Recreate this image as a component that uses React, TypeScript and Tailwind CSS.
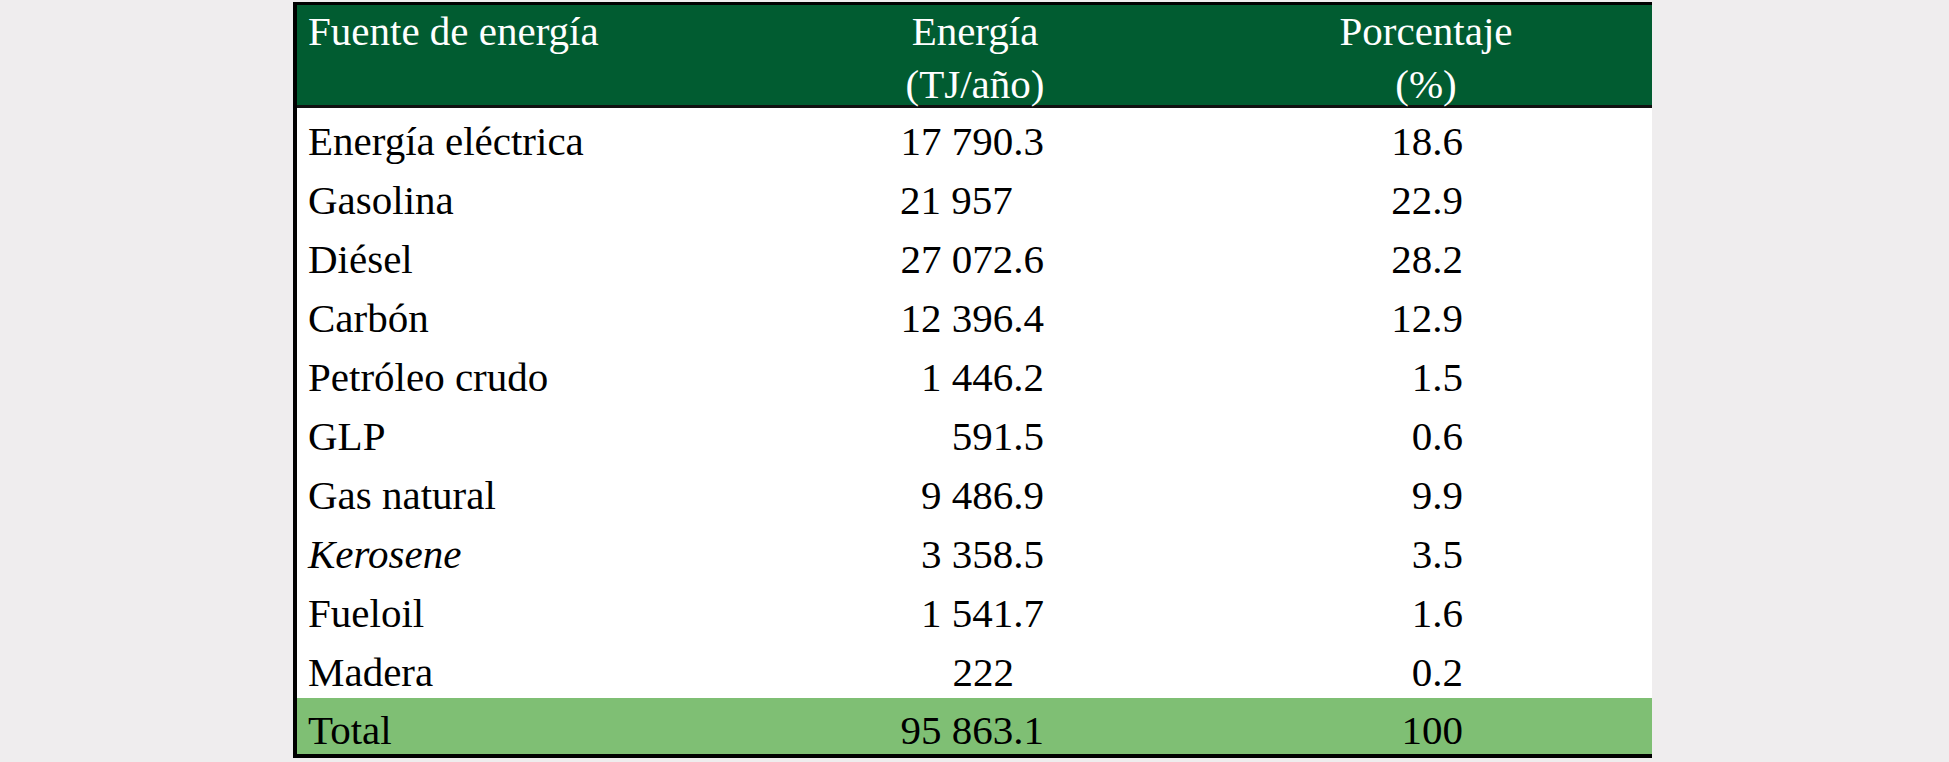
export default function App(){

  const rows = [
    { name:"Energía eléctrica", energy:"17 790.3", pct:"18.6" },
    { name:"Gasolina", energy:"21 957", pct:"22.9", align:"left" },
    { name:"Diésel", energy:"27 072.6", pct:"28.2" },
    { name:"Carbón", energy:"12 396.4", pct:"12.9" },
    { name:"Petróleo crudo", energy:"1 446.2", pct:"1.5" },
    { name:"GLP", energy:"591.5", pct:"0.6" },
    { name:"Gas natural", energy:"9 486.9", pct:"9.9" },
    { name:"Kerosene", energy:"3 358.5", pct:"3.5", italic:true },
    { name:"Fueloil", energy:"1 541.7", pct:"1.6" },
    { name:"Madera", energy:"222", pct:"0.2", align:"mid" },
  ]

  const energyCls = (align?:string)=>{
    if(align==="left") return "pl-[145px] text-left"
    if(align==="mid") return "pr-[181px] text-right"
    return "pr-[151px] text-right"
  }

  return(
    <div className="min-h-screen bg-[#efedee] pt-[2px] text-[41px] text-black font-['Liberation_Serif','Times_New_Roman',serif]">

      <div className="ml-[293px] w-[1359px] border-l-4 border-t-[3px] border-b-4 border-black bg-white">

        {/* header */}
        <div className="grid grid-cols-[458px_440px_457px] h-[103px] bg-[#015c31] text-white leading-[53px] border-b-[3px] border-[#111]">
          <div className="pl-[11px]">Fuente de energía</div>
          <div className="text-center">Energía<br/>(TJ/año)</div>
          <div className="text-center pl-[5px]">Porcentaje<br/>(%)</div>
        </div>

        {/* rows */}
        {rows.map(r=>(
          <div key={r.name} className="grid grid-cols-[458px_440px_457px] h-[59px] items-center pt-[3px]">
            <div className={"pl-[11px] "+(r.italic ? "italic" : "")}>{r.name}</div>
            <div className={energyCls(r.align)}>{r.energy}</div>
            <div className="text-right pr-[189px]">{r.pct}</div>
          </div>
        ))}

        {/* total */}
        <div className="grid grid-cols-[458px_440px_457px] h-[56px] items-center pt-[2px] bg-[#7fbf74]">
          <div className="pl-[11px]">Total</div>
          <div className="text-right pr-[151px]">95 863.1</div>
          <div className="text-right pr-[189px]">100</div>
        </div>

      </div>

    </div>
  )
}
